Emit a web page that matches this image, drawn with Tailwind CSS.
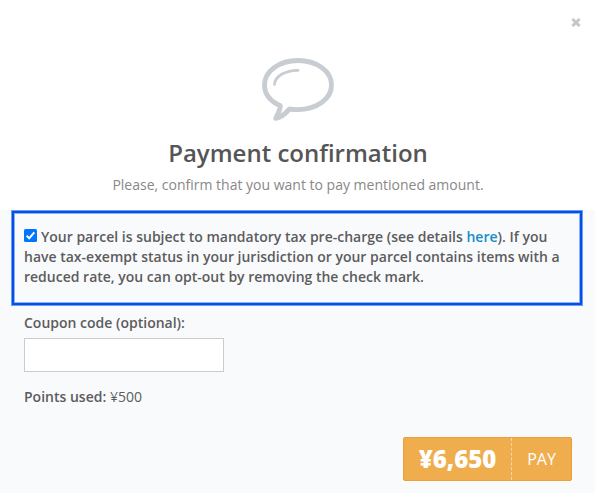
<!DOCTYPE html>
<html lang="en">
<head>
<meta charset="utf-8">
<title>Payment confirmation</title>
<script src="https://cdn.jsdelivr.net/npm/@tailwindcss/browser@4"></script>
</head>
<body class="w-[595px] h-[493px] overflow-hidden bg-white font-['Open_Sans','Noto_Sans',sans-serif] text-sm leading-5 text-[#5c5c5c]">
<main class="relative flex h-full flex-col">
  <button class="absolute left-[571px] top-[18px]" aria-label="Close">
    <svg class="block" width="10" height="9" viewBox="0 0 10 9" fill="none" stroke="#c6c6c6" stroke-width="2.8"><path d="M1.400 .9 8.600 8.100M8.600 .9 1.400 8.100"/></svg>
  </button>
  <header class="flex h-[210px] shrink-0 flex-col items-center pt-[56px] pl-px">
    <svg class="block shrink-0" width="76" height="67" viewBox="0 0 76 67" fill="none" stroke="#c8cdd3" stroke-linecap="round" stroke-linejoin="round">
      <path stroke-width="4.9" d="M38 4.500C19.500 4.500 4.500 15 4.500 29C4.500 38.500 11 45.500 20.300 49.800C20.300 54 17.500 58.500 15.800 62.300C20.500 61.500 25.500 57.500 29.500 53C32 53.400 35 53.600 38 53.600C56.500 53.600 71.500 43 71.500 29C71.500 15 56.500 4.500 38 4.500Z"/>
      <path stroke-width="2.8" d="M14.500 28.300C15 20 25 14.500 38 14.300"/>
    </svg>
    <h1 class="mt-[14px] text-2xl leading-8 font-semibold text-[#555]">Payment confirmation</h1>
    <p class="mt-[6px] text-[#888]">Please, confirm that you want to pay mentioned amount.</p>
  </header>
  <section class="grow bg-[#f9fafc]">
    <label class="ml-[11px] block h-[96px] w-[572px] border border-[#6f9bf3]">
      <span class="block h-full border-2 border-[#0250e6] pl-[10px] pt-[14px] font-semibold whitespace-nowrap shadow-[inset_0_0_0_1px_#8fb1f5]">
        <svg class="mr-1 inline-block align-[0px]" width="13" height="13" viewBox="0 0 13 13"><rect width="13" height="13" rx="1.5" fill="#0075ff"/><path d="M2.700 6.800 5.200 9.300 10.300 3.300" fill="none" stroke="#fff" stroke-width="2"/></svg>Your parcel is subject to mandatory tax pre-charge (see details <a class="text-[#148dcd]">here</a>). If you<br>have tax-exempt status in your jurisdiction or your parcel contains items with a<br>reduced rate, you can opt-out by removing the check mark.
      </span>
    </label>
    <div class="px-6 pt-[7px]">
      <label for="coupon" class="block font-semibold">Coupon code (optional):</label>
      <input id="coupon" class="mt-[5px] block h-[34px] w-[200px] border border-[#ccc] bg-white px-3">
      <p class="mt-[15px]"><strong class="font-semibold">Points used:</strong> ¥500</p>
    </div>
    <div class="mt-[30px] flex pl-[403px]">
      <button class="flex h-11 w-[169px] rounded-xs border border-[#eba03a] bg-[#f0ad4e] text-white">
        <span class="flex h-full w-[107px] items-center justify-center text-2xl font-extrabold">¥6,650</span>
        <span class="flex h-full grow items-center justify-center border-l border-dashed border-[#f8d6a6] text-base">PAY</span>
      </button>
    </div>
  </section>
</main>
</body>
</html>
